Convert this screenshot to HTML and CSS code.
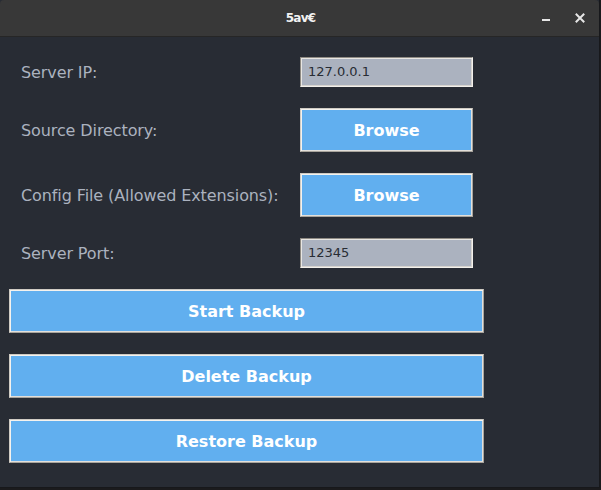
FILE: index.html
```html
<!DOCTYPE html>
<html>
<head>
<meta charset="utf-8">
<link rel="stylesheet" href="styles.css">
</head>
<body>
<div class="window">
  <div class="titlebar">
    <div class="title">5av€</div>
    <div class="controls">
      <span class="ctl min"><svg width="10" height="10" viewBox="0 0 10 10"><rect x="1" y="6" width="8" height="2" fill="#e6e6e6"/></svg></span>
      <span class="ctl close"><svg width="10" height="10" viewBox="0 0 10 10"><path d="M1.5 1.5 L8.5 8.5 M8.5 1.5 L1.5 8.5" stroke="#e6e6e6" stroke-width="2" stroke-linecap="square"/></svg></span>
    </div>
  </div>
  <div class="content">
    <div class="form">
      <div class="label">Server IP:</div>
      <div class="entry">127.0.0.1</div>
      <div class="label">Source Directory:</div>
      <div class="btn small">Browse</div>
      <div class="label">Config File (Allowed Extensions):</div>
      <div class="btn small">Browse</div>
      <div class="label">Server Port:</div>
      <div class="entry">12345</div>
    </div>
    <div class="actions">
      <div class="btn big">Start Backup</div>
      <div class="btn big">Delete Backup</div>
      <div class="btn big">Restore Backup</div>
    </div>
  </div>
</div>
<div class="desktop"></div>
</body>
</html>
```
FILE: styles.css
```css
html, body {
  margin: 0;
  padding: 0;
  background: #1b1b1d;
  width: 601px;
  height: 490px;
  overflow: hidden;
}
.window {
  width: 599px;
  height: 487px;
  background: #282c34;
  border-right: 1px solid #17181b;
  border-bottom: 1px solid #17181b;
  display: flex;
  flex-direction: column;
  font-family: "DejaVu Sans", sans-serif;
}
.titlebar {
  height: 36px;
  background: #383838;
  border-bottom: 1px solid #262626;
  border-radius: 4px 4px 0 0;
  display: flex;
  align-items: center;
  position: relative;
}
.title {
  flex: 1;
  text-align: center;
  color: #f2f2f2;
  font-family: "DejaVu Sans", sans-serif;
  font-weight: bold;
  font-size: 12px;
  letter-spacing: -0.8px;
  padding-left: 2px;
}
.controls {
  position: absolute;
  right: 14px;
  top: 13px;
  display: flex;
  gap: 24px;
}
.ctl {
  width: 10px;
  height: 10px;
  display: block;
}
.ctl svg { display: block; }
.content {
  flex: 1;
  padding-top: 20px;
}
.form {
  display: grid;
  grid-template-columns: 279px 173px;
  row-gap: 21px;
  padding-left: 21px;
  align-items: center;
}
.label {
  color: #abb2bf;
  font-size: 16px;
  letter-spacing: -0.1px;
}
.entry {
  box-sizing: border-box;
  height: 30px;
  background: #abb2bf;
  color: #282c34;
  font-size: 13px;
  line-height: 28px;
  padding-left: 7px;
  border: 1px solid;
  border-color: #8f8b84 #f2f0ec #f2f0ec #8f8b84;
  box-shadow: inset 1px 1px 0 #e8e6e2, inset -1px -1px 0 #d6d3ce;
}
.btn {
  box-sizing: border-box;
  height: 44px;
  background: #61afef;
  color: #ffffff;
  font-weight: bold;
  font-size: 16px;
  display: flex;
  align-items: center;
  justify-content: center;
  border: 1px solid;
  border-color: #cfcbc3 #a8a49c #a8a49c #cfcbc3;
  box-shadow: inset 1px 1px 0 #f4f2ee, inset -1px -1px 0 #e2dfda;
}
.actions {
  margin-top: 21px;
  padding-left: 9px;
  display: flex;
  flex-direction: column;
  gap: 21px;
}
.btn.big {
  width: 475px;
}
.desktop {
  height: 2px;
  background: #1b1b1d;
}
```
